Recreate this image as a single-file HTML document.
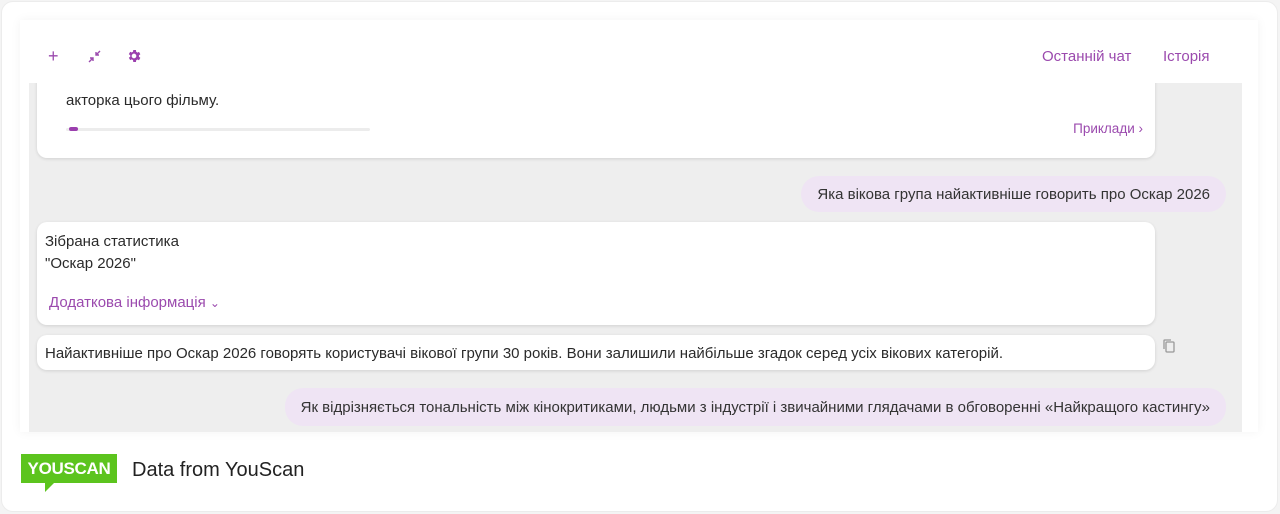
<!DOCTYPE html>
<html><head><meta charset="utf-8"><style>
*{box-sizing:border-box;margin:0;padding:0}
body{width:1280px;height:514px;background:#f4f4f4;font-family:"Liberation Sans","DejaVu Sans",sans-serif;position:relative;overflow:hidden}
.outer{position:absolute;left:1px;top:1px;width:1277px;height:511px;background:#fff;border:1px solid #ececec;border-radius:12px}
.panel{position:absolute;left:20px;top:20px;width:1238px;height:412px;background:#fff;box-shadow:0 0 10px rgba(0,0,0,.05)}
.head{position:absolute;left:20px;top:20px;width:1238px;height:63px;background:#fff}
.gray{position:absolute;left:29px;top:83px;width:1213px;height:349px;background:#eeeeee;overflow:hidden}
.card{position:absolute;left:8px;width:1118px;background:#fff;border-radius:10px;box-shadow:0 1px 3px rgba(0,0,0,.12);font-size:15px;color:#2a2a2a}
.bub{position:absolute;right:16px;background:#efe4f4;border-radius:18px;font-size:15px;color:#333;padding:0 16px;display:flex;align-items:center}
.p{color:#9b4aae}
</style></head><body>
<div class="outer"></div>
<div class="panel"></div>
<div class="gray">
 <div class="card" style="top:-20px;height:95px">
  <div style="position:absolute;left:29px;top:2px;color:#888;letter-spacing:3px">. . . . . . .</div>
  <div style="position:absolute;left:29px;top:29px">акторка цього фільму.</div>
  <div style="position:absolute;left:29px;top:65px;width:304px;height:3px;background:#ececec;border-radius:2px"></div>
  <div style="position:absolute;left:32px;top:64px;width:9px;height:4px;background:#9b3fae;border-radius:2px"></div>
  <div class="p" style="position:absolute;right:12px;top:58px;font-size:13.5px">Приклади ›</div>
 </div>
 <div class="bub" style="top:93px;height:36px;padding-top:1px">Яка вікова група найактивніше говорить про Оскар 2026</div>
 <div class="card" style="top:139px;height:103px">
  <div style="position:absolute;left:8px;top:11px">Зібрана статистика</div>
  <div style="position:absolute;left:8px;top:33px">"Оскар 2026"</div>
  <div class="p" style="position:absolute;left:12px;top:72px;font-size:15px">Додаткова інформація <span style="font-size:12px">⌄</span></div>
 </div>
 <div class="card" style="top:252px;height:35px;display:flex;align-items:center;padding-left:8px;padding-top:1px">Найактивніше про Оскар 2026 говорять користувачі вікової групи 30 років. Вони залишили найбільше згадок серед усіх вікових категорій.</div>
 <svg style="position:absolute;left:1133px;top:255px" width="14" height="16" viewBox="0 0 14 16" fill="none" stroke="#999" stroke-width="1.3"><rect x="4" y="4" width="8" height="10" rx="1"/><path d="M2 11V2.5A.5.5 0 0 1 2.5 2H9"/></svg>
 <div class="bub" style="top:305px;height:38px;padding-top:1px">Як відрізняється тональність між кінокритиками, людьми з індустрії і звичайними глядачами в обговоренні «Найкращого кастингу»</div>
</div>
<div class="head">
 <div class="p" style="position:absolute;left:28px;top:27px;font-size:18px;line-height:18px">+</div>
 <svg style="position:absolute;left:68px;top:30px" width="13" height="13" viewBox="0 0 13 13" stroke="#9b4aae" stroke-width="1.4" fill="none"><path d="M1 12L5 8M2 8h3v3M12 1L8 5M8 2v3h3"/></svg>
 <svg style="position:absolute;left:106px;top:28px" width="16" height="16" viewBox="0 0 24 24" fill="#9b3fae"><path d="M19.4 13a7.5 7.5 0 0 0 0-2l2.1-1.6-2-3.5-2.5 1a7 7 0 0 0-1.7-1L14.9 3h-4l-.4 2.7a7 7 0 0 0-1.7 1l-2.5-1-2 3.5L6.4 11a7.5 7.5 0 0 0 0 2l-2.1 1.6 2 3.5 2.5-1a7 7 0 0 0 1.7 1l.4 2.9h4l.4-2.7a7 7 0 0 0 1.7-1l2.5 1 2-3.5zM12 15.5a3.5 3.5 0 1 1 0-7 3.5 3.5 0 0 1 0 7z"/></svg>
 <div class="p" style="position:absolute;left:1022px;top:28px;font-size:15px">Останній чат</div>
 <div class="p" style="position:absolute;left:1143px;top:28px;font-size:15px">Історія</div>
</div>
<div style="position:absolute;left:21px;top:454px;width:96px;height:29px;background:#5cc41e;color:#fff;font-weight:bold;font-size:17px;display:flex;align-items:center;justify-content:center;letter-spacing:-.3px">YOUSCAN</div>
<div style="position:absolute;left:45px;top:482px;width:0;height:0;border-top:10px solid #5cc41e;border-right:10px solid transparent"></div>
<div style="position:absolute;left:132px;top:459px;font-size:20px;color:#222">Data from YouScan</div>
</body></html>
